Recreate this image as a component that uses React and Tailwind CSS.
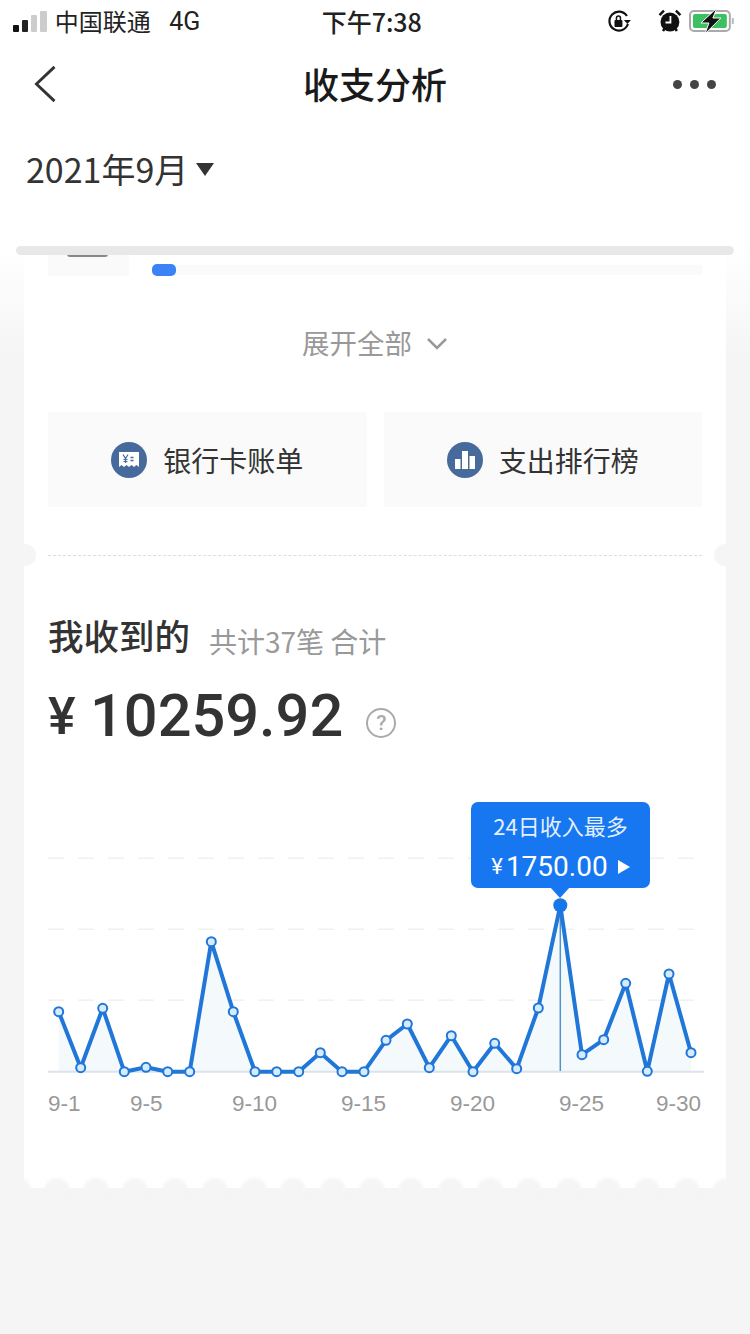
import React from 'react';

const cjk = { fontFamily: '"Noto Sans CJK SC", sans-serif' };
const points = [
  [58.7, 1011.7], [80.7, 1067.7], [102.7, 1008.3], [124.3, 1071.7], [146, 1067.3], [167.7, 1071.7],
  [189.7, 1071.7], [211.3, 941.7], [233.3, 1011.7], [255, 1071.7], [276.7, 1071.7], [298.7, 1071.7],
  [320.3, 1052.7], [342, 1071.7], [364, 1071.7], [386, 1040.3], [407.3, 1024], [429.3, 1067.7],
  [451.3, 1035.7], [473, 1071.7], [494.7, 1043.3], [516.7, 1068.7], [538.3, 1008], [560.3, 905.3],
  [582, 1054.7], [603.7, 1039.7], [625.7, 983.3], [647.3, 1071.3], [669, 974], [691, 1052.7],
];
const ticks = [['9-1', 48], ['9-5', 130], ['9-10', 232], ['9-15', 341], ['9-20', 450], ['9-25', 559], ['9-30', 656]];
const scallops = [18, 57, 96, 135, 175, 215, 254, 293, 333, 372, 411, 451, 490, 529, 569, 608, 647, 687, 726];

const StatusBar = () => (
  <div className="h-[42px] flex items-center pl-[13px] pr-[15px] text-[#222]" style={cjk}>
    <div className="flex items-end gap-[3px] w-[42px] h-[21px]">
      <div className="w-[6px] h-[7px] rounded-[1px] bg-[#111]" />
      <div className="w-[6px] h-[12px] rounded-[1px] bg-[#222]" />
      <div className="w-[6px] h-[17px] rounded-[1px] bg-[#ccc]" />
      <div className="w-[7px] h-[21px] rounded-[1px] bg-[#ccc]" />
    </div>
    <span className="text-[24px] leading-none w-[115px]">中国联通</span>
    <span className="text-[25px] leading-none w-[153px] font-['Roboto']">4G</span>
    <span className="text-[25px] leading-none font-medium w-[286px]">下午7:38</span>
    <svg width="26" height="26" viewBox="0 0 26 26" className="mr-[26px]">
      <path d="M21 8a9.500 9.500 0 1 0 1 8" fill="none" stroke="#111" strokeWidth="2.200" />
      <path d="M18 12h7l-3.500 4z" fill="#111" />
      <rect x="8.500" y="12" width="8" height="7" rx="1" fill="#111" />
      <path d="M10.500 12v-2a2 2 0 0 1 4 0v2" fill="none" stroke="#111" strokeWidth="1.500" />
    </svg>
    <svg width="24" height="26" viewBox="0 0 24 26" className="mr-[7px]">
      <circle cx="12" cy="14" r="9.500" fill="#111" />
      <path d="M1.500 7 6 2.500M22.500 7 18 2.500M5 23l2-3M19 23l-2-3" stroke="#111" strokeWidth="2.500" />
      <path d="M12.500 8v6.500H7.500" fill="none" stroke="#fff" strokeWidth="1.800" />
    </svg>
    <svg width="46" height="24" viewBox="0 0 46 24">
      <rect x="1" y="2" width="40" height="20" rx="4" fill="none" stroke="#aaa" strokeWidth="2" />
      <rect x="4" y="5" width="34" height="14" rx="2" fill="#3cc060" />
      <path d="M44 9v6" stroke="#bbb" strokeWidth="2" />
      <path d="M28 -1 12 14h8l-4 11 16-16h-8z" fill="#111" stroke="#fff" strokeWidth="1" />
    </svg>
  </div>
);

const NavBar = () => (
  <div className="h-[86px] flex items-center justify-between pl-[32px] pr-[34px]">
    <div className="w-[45px] flex">
      <svg width="26" height="38" viewBox="0 0 26 40" className="mb-[2px]">
        <path d="M23 2 4 20l19 18" fill="none" stroke="#333" strokeWidth="3" />
      </svg>
    </div>
    <h1 className="text-[36px] leading-none font-medium text-[#1a1a1a] mb-[5px]" style={cjk}>收支分析</h1>
    <div className="flex gap-[8px] mb-[2px]">
      <div className="w-[9px] h-[9px] rounded-full bg-[#444]" />
      <div className="w-[9px] h-[9px] rounded-full bg-[#444]" />
      <div className="w-[9px] h-[9px] rounded-full bg-[#444]" />
    </div>
  </div>
);

const BillIcon = () => (
  <svg width="36" height="36" viewBox="0 0 36 36">
    <circle cx="18" cy="18" r="18" fill="#476a9c" />
    <path d="M8 10h20v15l-2.500-2-2.500 2-2.500-2-2.500 2-2.500-2-2.500 2-2.500-2L8 25z" fill="#fff" />
    <path d="M12 12.500l2.500 4 2.500-4M14.500 16.500V21M12.500 17.500h4M12.500 19.500h4" fill="none" stroke="#476a9c" strokeWidth="1.200" />
    <path d="M19.500 15.500h3M19.500 18.500h3" stroke="#476a9c" strokeWidth="1.400" />
  </svg>
);

const BarsIcon = () => (
  <svg width="36" height="36" viewBox="0 0 36 36">
    <circle cx="18" cy="18" r="18" fill="#476a9c" />
    <rect x="8" y="17" width="5.500" height="10" fill="#fff" />
    <rect x="15" y="9" width="6" height="18" fill="#fff" />
    <rect x="22.500" y="14" width="5.500" height="13" fill="#fff" />
  </svg>
);

const ActionButton = ({ icon, label }) => (
  <div className="flex-1 h-[95px] bg-[#fafafa] flex items-center justify-center gap-[16px]">
    {icon}
    <span className="text-[28px] leading-none text-[#333]" style={cjk}>{label}</span>
  </div>
);

const Chart = () => {
  const line = points.map((p) => p.join(',')).join(' ');
  return (
    <div className="relative mt-[41px] h-[340px] -mx-[24px]">
      <svg width="702" height="340" viewBox="24 790 702 340">
        {[858.3, 929.3, 1000.3].map((y) => (
          <line key={y} x1="48" x2="697" y1={y} y2={y} stroke="#f0f0f0" strokeWidth="1.500" strokeDasharray="16 14" />
        ))}
        <polygon points={`58.7,1071.7 ${line} 691,1071.7`} fill="#f4f9fc" />
        <line x1="48" x2="704" y1="1071.700" y2="1071.700" stroke="#dbe3ec" strokeWidth="2" />
        <line x1="560.300" x2="560.300" y1="905" y2="1071" stroke="#4f93cf" strokeWidth="1.500" />
        <polyline points={line} fill="none" stroke="#2077d8" strokeWidth="4" strokeLinejoin="round" />
        {points.map(([x, y]) => (
          x === 560.3
            ? <circle key={x} cx={x} cy={y} r="7" fill="#1677e6" />
            : <circle key={x} cx={x} cy={y} r="4.500" fill="#d6ecfd" stroke="#2077d8" strokeWidth="2" />
        ))}
        {ticks.map(([t, x]) => (
          <text key={t} x={x} y="1111" fontSize="22.500" fill="#999999" fontFamily='"Liberation Sans", sans-serif'>{t}</text>
        ))}
      </svg>
      <div className="absolute left-[447px] top-[12px] w-[179px] h-[86px] rounded-[7px] bg-[#1677f0] text-white flex flex-col items-center pt-[9px]">
        <span className="text-[22px] leading-[28px] text-[#e4f0ff]" style={cjk}>24日收入最多</span>
        <div className="flex items-center mt-[11px] font-['Roboto'] text-[28px] leading-[34px]">
          <span className="text-[22px] mr-[3px]">¥</span>
          <span>1750.00</span>
          <span className="ml-[10px] w-0 h-0 border-y-[7px] border-y-transparent border-l-[12px] border-l-white" />
        </div>
        <span className="absolute left-[79px] top-[85px] w-0 h-0 border-x-[10px] border-x-transparent border-t-[11px] border-t-[#1677f0]" />
      </div>
    </div>
  );
};

export default function App() {
  return (
    <div className="w-[750px] h-[1334px] bg-white flex flex-col overflow-hidden">
      <StatusBar />
      <NavBar />
      <div className="flex items-center pl-[26px] h-[118px] pb-[36px]">
        <span className="text-[34px] leading-none text-[#333]" style={cjk}>2021年9月</span>
        <span className="ml-[8px] w-0 h-0 border-x-[9px] border-x-transparent border-t-[13px] border-t-[#333]" />
      </div>

      <div className="flex-1 relative bg-[linear-gradient(#ffffff,#f5f5f5_110px)]">
        <div className="relative mx-[24px] h-[942px] bg-white px-[24px] overflow-hidden">
          {/* leftover of the scrolled month list */}
          <div className="flex items-end h-[30px]">
            <div className="w-[81px] h-[29px] bg-[#fafafa] pl-[19px]">
              <div className="w-[41px] h-[10px] border-x-2 border-b-2 border-[#888] rounded-b-[3px]" />
            </div>
            <div className="ml-[23px] w-[24px] h-[12px] rounded-[5px] bg-[#3b82f6]" />
            <div className="flex-1 h-[10px] mb-[1px] bg-[#fafafa]" />
          </div>

          <div className="h-[136px] flex items-center justify-center gap-[14px]">
            <span className="text-[27.500px] leading-none text-[#999] mb-[2px]" style={cjk}>展开全部</span>
            <svg width="22" height="14" viewBox="0 0 22 14">
              <path d="M2 2l9 9 9-9" fill="none" stroke="#999" strokeWidth="2.500" />
            </svg>
          </div>

          <div className="flex gap-[17px]">
            <ActionButton icon={<BillIcon />} label="银行卡账单" />
            <ActionButton icon={<BarsIcon />} label="支出排行榜" />
          </div>

          <div className="mt-[48px] border-t-[1.500px] border-dashed border-[#dddddd]" />

          <div className="mt-[57px] flex items-center h-[44px]">
            <h2 className="text-[35.500px] leading-none font-medium text-[#333]" style={cjk}>我收到的</h2>
            <span className="ml-[19px] text-[28px] leading-none text-[#999] mt-[11px]" style={cjk}>共计37笔 合计</span>
          </div>

          <div className="mt-[28px] flex items-center h-[64px]">
            <span className="text-[52px] leading-none font-medium text-[#333] w-[42px] font-['Roboto']">¥</span>
            <span className="text-[59.500px] leading-none font-medium text-[#333] font-['Roboto']">10259.92</span>
            <span className="ml-[23px] mt-[12px] w-[30px] h-[30px] rounded-full border-[2.500px] border-[#aaa] text-[#aaa] text-[21px] leading-none flex items-center justify-center font-['Roboto'] font-medium">?</span>
          </div>

          <Chart />
        </div>

        {/* top slot of the ticket printer */}
        <div className="absolute left-[16px] top-0 w-[718px] h-[9px] rounded-full bg-[#e8e8e8]" />

        {/* ticket notches */}
        <div className="absolute left-[14px] top-[298px] w-[22px] h-[22px] rounded-full bg-[#f5f5f5]" />
        <div className="absolute right-[14px] top-[298px] w-[22px] h-[22px] rounded-full bg-[#f5f5f5]" />

        {/* scalloped bottom edge */}
        <div className="absolute left-0 top-[932px] w-[750px] h-[26px] blur-[1.500px]">
          {scallops.map((x) => (
            <div key={x} className="absolute top-0 w-[26px] h-[26px] rounded-full bg-[#f5f5f5]" style={{ left: x - 13 }} />
          ))}
        </div>
      </div>
    </div>
  );
}
